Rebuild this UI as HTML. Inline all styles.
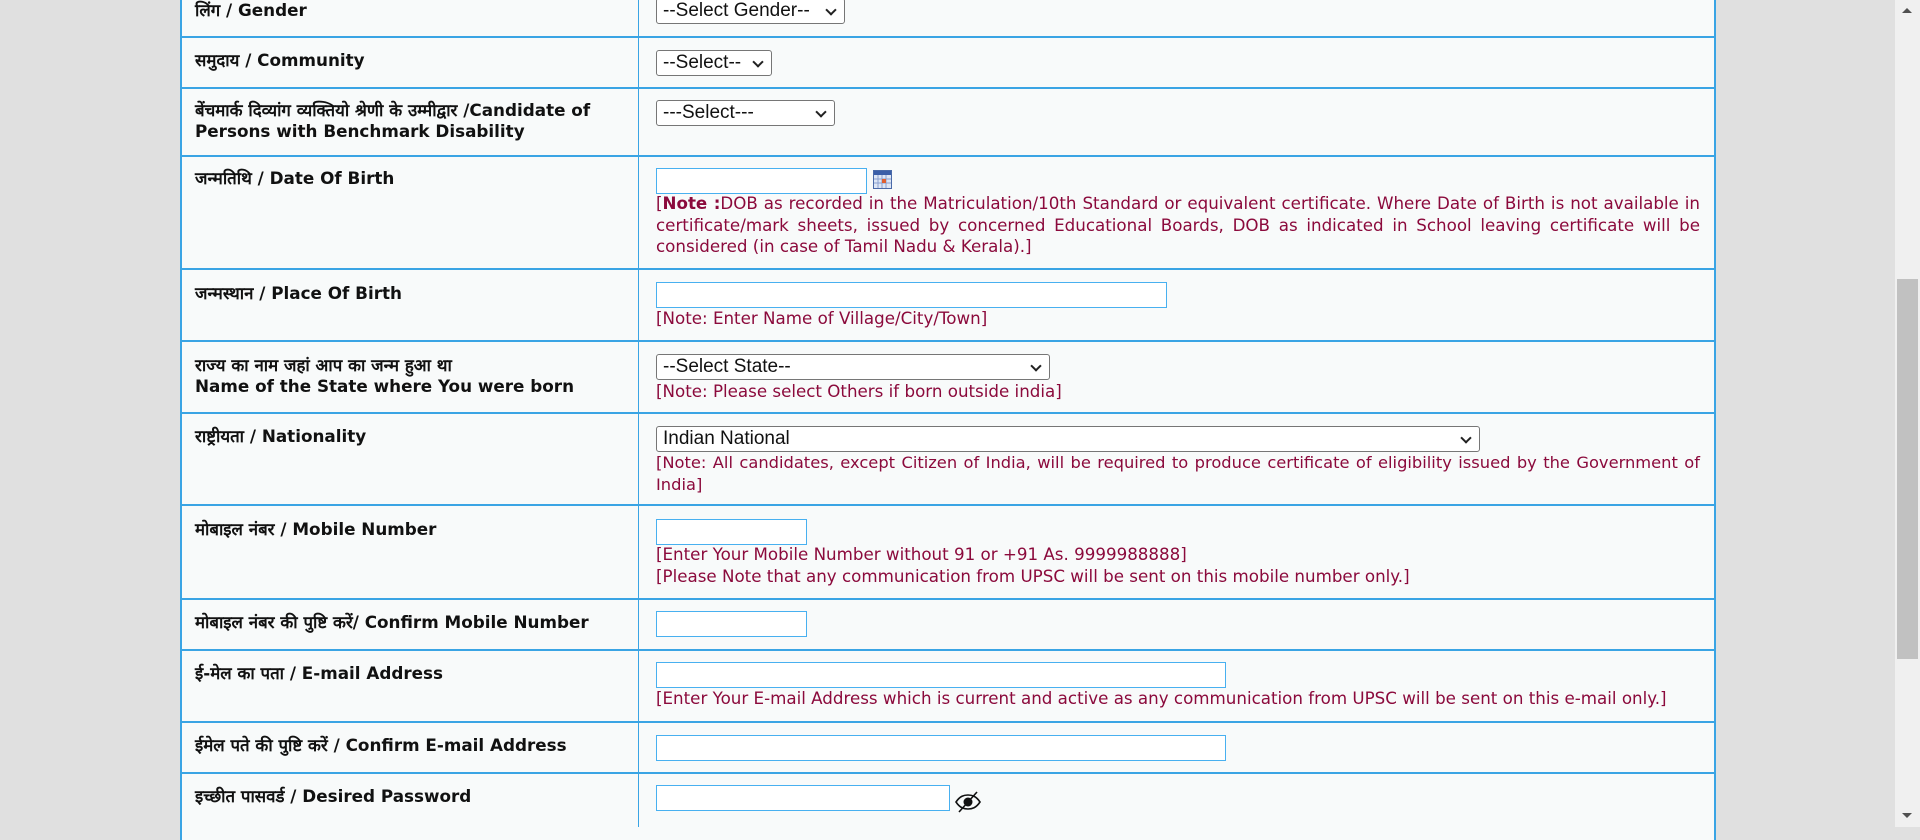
<!DOCTYPE html>
<html><head><meta charset="utf-8"><style>
*{box-sizing:border-box;margin:0;padding:0}
body{width:1920px;height:827px;overflow:hidden;background:#e0e0e0;position:relative;font-family:"Liberation Sans","Noto Sans CJK SC",sans-serif}
.tbl{position:absolute;left:180px;top:-10px;width:1536px;height:850px;background:#f8fafa;border-left:2px solid #3aa4e4;border-right:2px solid #3aa4e4}
.h{position:absolute;left:180px;width:1536px;height:2px;background:#3aa4e4}
.v{position:absolute;left:638px;top:0;width:1px;height:827px;background:#3aa4e4}
.l{position:absolute;left:195px;font-weight:bold;font-family:"DejaVu Sans",sans-serif;font-size:16.8px;color:#111;line-height:21px;white-space:nowrap}
.i{position:absolute;left:656px;height:26px;background:#fff;border:1.5px solid #48b0f0}
.s{position:absolute;left:656px;height:26px;background:#fff;border:1px solid #767676;border-radius:3px;font-size:19px;color:#111;padding-left:6px;line-height:23px;white-space:nowrap}
.s:after{content:"";position:absolute;right:9px;top:7px;width:6px;height:6px;border-right:2px solid #222;border-bottom:2px solid #222;transform:rotate(45deg)}
.n{position:absolute;left:656px;width:1044px;font-family:"DejaVu Sans",sans-serif;font-size:16.7px;color:#8b0a3c;line-height:21.5px;text-align:justify}
.sb{position:absolute;left:1895px;top:0;width:25px;height:827px;background:#f0f0f0}
</style></head><body>
<div class="tbl"></div>
<div class="v"></div>
<div class="h" style="top:36px"></div>
<div class="h" style="top:87px"></div>
<div class="h" style="top:155px"></div>
<div class="h" style="top:268px"></div>
<div class="h" style="top:340px"></div>
<div class="h" style="top:412px"></div>
<div class="h" style="top:504px"></div>
<div class="h" style="top:598px"></div>
<div class="h" style="top:649px"></div>
<div class="h" style="top:721px"></div>
<div class="h" style="top:772px"></div>

<div class="l" style="top:0px">लिंग / Gender</div>
<div class="s" style="top:-2px;width:189px">--Select Gender--</div>
<div class="l" style="top:50px">समुदाय / Community</div>
<div class="s" style="top:50px;width:116px">--Select--</div>
<div class="l" style="top:100px">बेंचमार्क दिव्यांग व्यक्तियो श्रेणी के उम्मीद्वार /Candidate of<br>Persons with Benchmark Disability</div>
<div class="s" style="top:100px;width:179px">---Select---</div>

<div class="l" style="top:168px">जन्मतिथि / Date Of Birth</div>
<div class="i" style="top:168px;width:211px"></div>
<svg style="position:absolute;left:873px;top:170px" width="19" height="19"><rect x="0.5" y="0.5" width="18" height="18" fill="#dde6f5" stroke="#4a6aa8"/><rect x="1" y="1" width="17" height="4" fill="#3a5ea8"/><g stroke="#8aa0d0"><line x1="5" y1="5" x2="5" y2="18"/><line x1="9" y1="5" x2="9" y2="18"/><line x1="13" y1="5" x2="13" y2="18"/><line x1="1" y1="9" x2="18" y2="9"/><line x1="1" y1="13" x2="18" y2="13"/></g><rect x="9" y="9" width="4" height="4" fill="#e06030"/></svg>
<div class="n" style="top:193px">[<b>Note :</b>DOB as recorded in the Matriculation/10th Standard or equivalent certificate. Where Date of Birth is not available in certificate/mark sheets, issued by concerned Educational Boards, DOB as indicated in School leaving certificate will be considered (in case of Tamil Nadu &amp; Kerala).]</div>

<div class="l" style="top:283px">जन्मस्थान / Place Of Birth</div>
<div class="i" style="top:282px;width:511px"></div>
<div class="n" style="top:308px">[Note: Enter Name of Village/City/Town]</div>

<div class="l" style="top:355px">राज्य का नाम जहां आप का जन्म हुआ था<br>Name of the State where You were born</div>
<div class="s" style="top:354px;width:394px">--Select State--</div>
<div class="n" style="top:381px">[Note: Please select Others if born outside india]</div>

<div class="l" style="top:426px">राष्ट्रीयता / Nationality</div>
<div class="s" style="top:426px;width:824px">Indian National</div>
<div class="n" style="top:452px;font-size:16.3px">[Note: All candidates, except Citizen of India, will be required to produce certificate of eligibility issued by the Government of India]</div>

<div class="l" style="top:519px">मोबाइल नंबर / Mobile Number</div>
<div class="i" style="top:519px;width:151px"></div>
<div class="n" style="top:544px">[Enter Your Mobile Number without 91 or +91 As. 9999988888]<br>[Please Note that any communication from UPSC will be sent on this mobile number only.]</div>

<div class="l" style="top:612px">मोबाइल नंबर की पुष्टि करें/ Confirm Mobile Number</div>
<div class="i" style="top:611px;width:151px"></div>

<div class="l" style="top:663px">ई-मेल का पता / E-mail Address</div>
<div class="i" style="top:662px;width:570px"></div>
<div class="n" style="top:688px;white-space:nowrap">[Enter Your E-mail Address which is current and active as any communication from UPSC will be sent on this e-mail only.]</div>

<div class="l" style="top:735px">ईमेल पते की पुष्टि करें / Confirm E-mail Address</div>
<div class="i" style="top:735px;width:570px"></div>

<div class="l" style="top:786px">इच्छीत पासवर्ड / Desired Password</div>
<div class="i" style="top:785px;width:294px"></div>
<svg style="position:absolute;left:954px;top:791px" width="28" height="22" viewBox="0 0 28 22"><path d="M2 11C6 5 10 4 14 4s8 1 12 7c-4 6-8 7-12 7S6 17 2 11z" fill="none" stroke="#111" stroke-width="1.6"/><circle cx="14" cy="11" r="4.5" fill="#111"/><line x1="5" y1="21" x2="23" y2="1" stroke="#111" stroke-width="1.6"/></svg>

<div class="sb"></div>
<div style="position:absolute;left:1897px;top:279px;width:21px;height:380px;background:#c1c1c1"></div>
<div style="position:absolute;left:1902px;top:8px;width:0;height:0;border-left:5px solid transparent;border-right:5px solid transparent;border-bottom:5px solid #505050"></div>
<div style="position:absolute;left:1902px;top:813px;width:0;height:0;border-left:5px solid transparent;border-right:5px solid transparent;border-top:5px solid #505050"></div>
</body></html>
